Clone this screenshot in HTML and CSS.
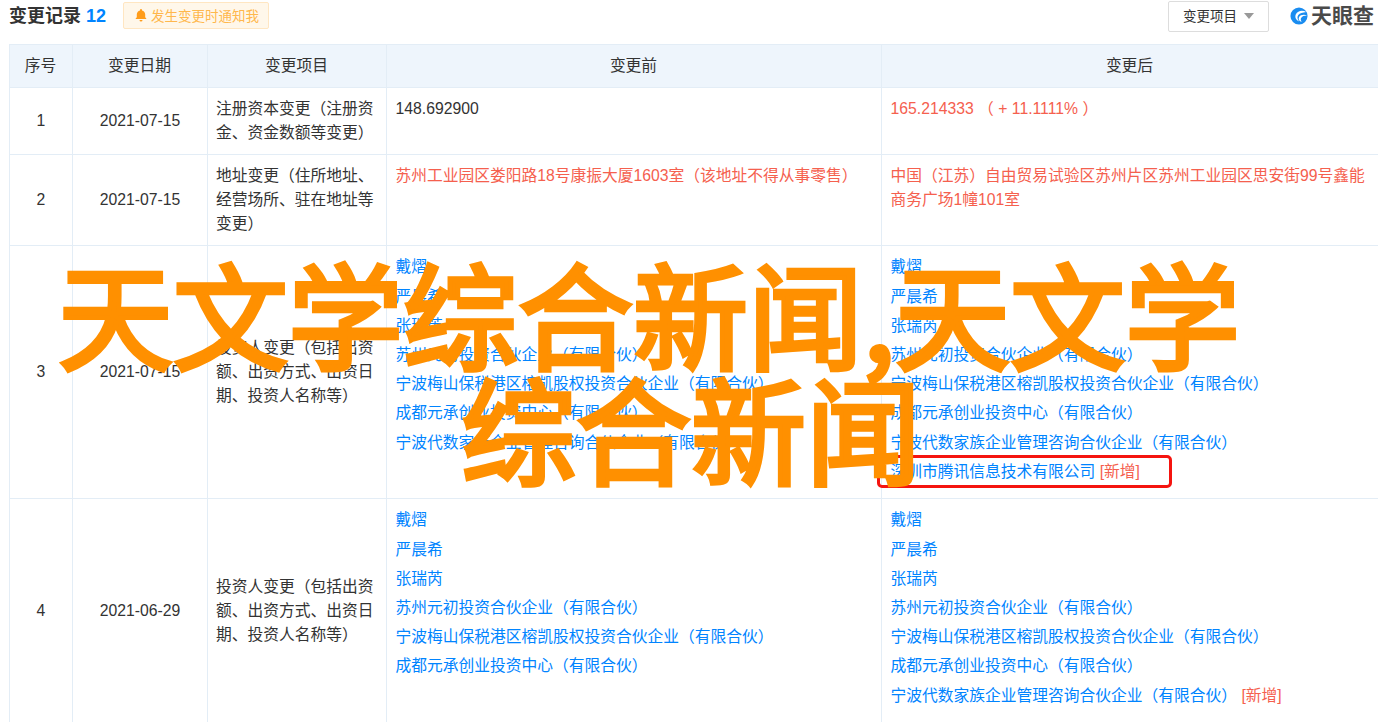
FILE: index.html
```html
<!DOCTYPE html>
<html lang="zh-CN">
<head>
<meta charset="utf-8">
<title>变更记录</title>
<link rel="stylesheet" href="styles.css">
</head>
<body>
<div class="page">
  <header class="topbar">
    <div class="title">变更记录 <span class="count">12</span></div>
    <div class="notify">
      <svg class="bell" viewBox="0 0 14 14" width="14" height="14"><path d="M7 1a1 1 0 0 1 1 1v.4c2 .5 3.2 2.2 3.2 4.2v2.6l1.1 1.3v.5H1.700v-.5l1.100-1.300V6.600c0-2 1.200-3.700 3.200-4.200V2a1 1 0 0 1 1-1zM5.500 12h3a1.500 1.500 0 0 1-3 0z" fill="#ff9c1a"/></svg>
      <span>发生变更时通知我</span>
    </div>
    <div class="filter">变更项目<span class="caret"></span></div>
    <div class="logo">
      <svg viewBox="0 0 20 20" width="18" height="18"><circle cx="10" cy="10" r="9.500" fill="#1a8cf0"/><path d="M18 5.500C14 3 8.500 4 6.500 8c-1.500 3.200.2 6.500 3.500 8-2-2.500-2.200-5-.8-7 1.700-2.300 5-3 8.800-3.500z" fill="#fff"/><path d="M19 9.500c-3 0-5.800.8-6.800 3-.5 1.200-.2 2.500.8 3.800-3-.3-4-3-3-5 1.500-2.600 5.500-3.300 9-1.800z" fill="#fff"/></svg>
      <span>天眼查</span>
    </div>
  </header>
  <table class="changes">
    <colgroup>
      <col class="c-no"><col class="c-date"><col class="c-item"><col class="c-before"><col class="c-after">
    </colgroup>
    <thead>
      <tr><th>序号</th><th>变更日期</th><th>变更项目</th><th>变更前</th><th>变更后</th></tr>
    </thead>
    <tbody>
      <tr class="r1">
        <td class="mid">1</td><td class="mid">2021-07-15</td>
        <td class="item">注册资本变更（注册资金、资金数额等变更）</td>
        <td class="val">148.692900</td>
        <td class="val red">165.214333 （ + 11.1111% ）</td>
      </tr>
      <tr class="r2">
        <td class="mid">2</td><td class="mid">2021-07-15</td>
        <td class="item">地址变更（住所地址、经营场所、驻在地址等变更）</td>
        <td class="val red">苏州工业园区娄阳路18号康振大厦1603室（该地址不得从事零售）</td>
        <td class="val red">中国（江苏）自由贸易试验区苏州片区苏州工业园区思安街99号鑫能商务广场1幢101室</td>
      </tr>
      <tr class="r3">
        <td class="mid">3</td><td class="mid">2021-07-15</td>
        <td class="item">投资人变更（包括出资额、出资方式、出资日期、投资人名称等）</td>
        <td class="list">
          <a>戴熠</a><a>严晨希</a><a>张瑞芮</a><a>苏州元初投资合伙企业（有限合伙）</a><a>宁波梅山保税港区榕凯股权投资合伙企业（有限合伙）</a><a>成都元承创业投资中心（有限合伙）</a><a>宁波代数家族企业管理咨询合伙企业（有限合伙）</a>
        </td>
        <td class="list">
          <a>戴熠</a><a>严晨希</a><a>张瑞芮</a><a>苏州元初投资合伙企业（有限合伙）</a><a>宁波梅山保税港区榕凯股权投资合伙企业（有限合伙）</a><a>成都元承创业投资中心（有限合伙）</a><a>宁波代数家族企业管理咨询合伙企业（有限合伙）</a>
          <a class="marked">深圳市腾讯信息技术有限公司 <em>[新增]</em><i class="redbox"></i></a>
        </td>
      </tr>
      <tr class="r4">
        <td class="mid">4</td><td class="mid">2021-06-29</td>
        <td class="item">投资人变更（包括出资额、出资方式、出资日期、投资人名称等）</td>
        <td class="list">
          <a>戴熠</a><a>严晨希</a><a>张瑞芮</a><a>苏州元初投资合伙企业（有限合伙）</a><a>宁波梅山保税港区榕凯股权投资合伙企业（有限合伙）</a><a>成都元承创业投资中心（有限合伙）</a>
        </td>
        <td class="list">
          <a>戴熠</a><a>严晨希</a><a>张瑞芮</a><a>苏州元初投资合伙企业（有限合伙）</a><a>宁波梅山保税港区榕凯股权投资合伙企业（有限合伙）</a><a>成都元承创业投资中心（有限合伙）</a>
          <a>宁波代数家族企业管理咨询合伙企业（有限合伙） <em>[新增]</em></a>
        </td>
      </tr>
    </tbody>
  </table>
  <div class="headline"><span class="line">天文学综合新闻,天文学</span><span class="line second">综合新闻</span></div>
</div>
</body>
</html>
```
FILE: styles.css
```css
* { box-sizing: border-box; }
html, body { margin: 0; padding: 0; height: 100%; overflow: hidden; background: #fff; }
body { font-family: "Liberation Sans", "Noto Sans CJK SC", sans-serif; font-size: 15.75px; color: #333; }
.page { position: relative; width: 1378px; height: 722px; overflow: hidden; }
.topbar { display: flex; align-items: flex-start; height: 44px; padding-left: 9px; }
.title { font-size: 18px; font-weight: 700; line-height: 20px; margin-top: 6px; width: 114px; color: #333; white-space: nowrap; }
.count { color: #0084ff; }
.notify { display: flex; align-items: center; gap: 3px; width: 146px; height: 27px; margin-top: 2px; padding: 0 0 2px 10px; background: #fff7ea; border: 1px solid #ffe6c2; border-radius: 2px; color: #ffb74d; font-size: 13.5px; white-space: nowrap; }
.filter { display: flex; align-items: center; justify-content: center; gap: 7px; width: 101px; height: 31px; margin-top: 1px; margin-left: auto; padding-bottom: 3px; border: 1px solid #ddd; border-radius: 2px; font-size: 13.5px; }
.caret { width: 0; height: 0; border-left: 5px solid transparent; border-right: 5px solid transparent; border-top: 6px solid #999; margin-top: 1px; }
.logo { display: flex; align-items: center; gap: 3px; margin: 5px 4px 0 21px; font-size: 21px; font-weight: 700; line-height: 22px; color: #4a4a4a; }
.changes { width: 1369px; margin-left: 9px; border-collapse: collapse; table-layout: fixed; color: #333; }
.c-no { width: 63px; }
.c-date { width: 135px; }
.c-item { width: 179px; }
.c-before { width: 495px; }
.c-after { width: 497px; }
.changes th, .changes td { border: 1px solid #e3edf6; }
.changes th { height: 43px; background: #eef5fc; font-weight: 400; text-align: center; padding: 0 1px 3px 0; }
.changes td { padding: 9px 8.5px 8px; line-height: 24px; vertical-align: top; }
.r1 { height: 67px; }
.r2 { height: 91px; }
.r3 { height: 253px; }
.r4 { height: 224px; }
.changes td.mid { text-align: center; vertical-align: middle; padding: 0; }
.changes td.item { vertical-align: middle; padding: 0 4px 0 8px; }
.changes td.list { padding: 6.4px 8.5px 0; }
.red { color: #f5604e; }
.list a { position: relative; display: block; line-height: 29.2px; color: #0084ff; white-space: nowrap; }
.list em { font-style: normal; color: #f5604e; }
.redbox { position: absolute; left: -14px; top: -1.500px; width: 295px; height: 33px; border: 3px solid #f5140f; border-radius: 5px; }
.headline { position: absolute; left: 58px; top: 254px; font-family: "Noto Sans CJK SC", sans-serif; font-size: 115px; line-height: 115px; font-weight: 400; -webkit-text-stroke: 4.500px #ff9000; color: #ff9000; white-space: nowrap; }
.line { display: block; }
.second { margin-left: 403px; }
```
